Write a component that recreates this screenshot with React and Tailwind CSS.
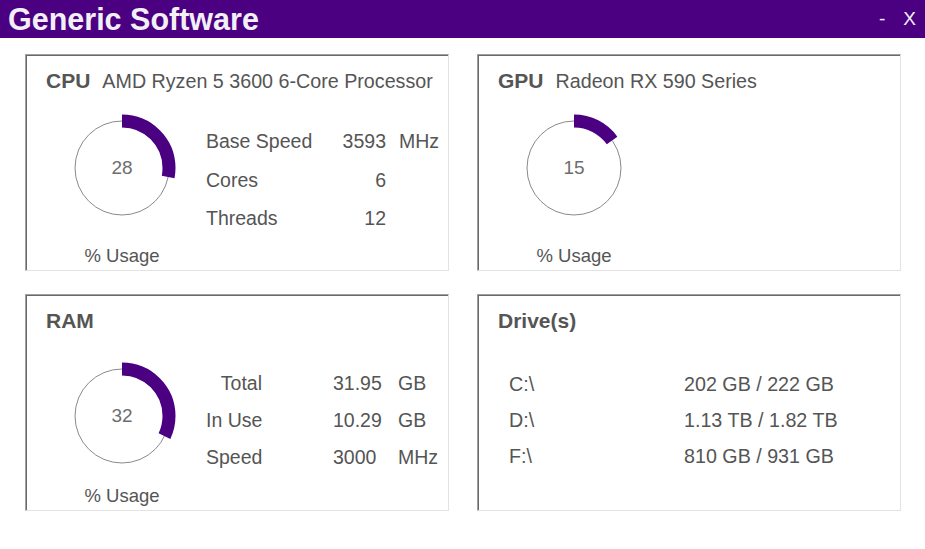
import React from 'react'

const PURPLE = '#4b0082'

function Gauge({ value, mt, gap }) {
  const r = 47
  const c = 2 * Math.PI * r
  return (
    <div className="flex w-[148px] ml-[22px] flex-col items-center self-start" style={{ marginTop: mt }}>
      <div className="relative h-[112px] w-[112px]">
        <svg width="112" height="112" viewBox="0 0 112 112">
          <circle cx="56" cy="56" r={r} fill="none" stroke="#8a8a8a" strokeWidth="1" />
          <circle
            cx="56"
            cy="56"
            r={r}
            fill="none"
            stroke={PURPLE}
            strokeWidth="13"
            strokeDasharray={`${(c * value) / 100} ${c}`}
            transform="rotate(-90 56 56)"
          />
        </svg>
        <div className="absolute inset-0 flex items-center justify-center text-[19px] text-[#6e6e6e]">
          {value}
        </div>
      </div>
      <div className="h-[22px] leading-[22px] text-[18.5px]" style={{ marginTop: gap }}>
        % Usage
      </div>
    </div>
  )
}

function Card({ title, subtitle, children }) {
  return (
    <div className="h-[217px] w-[424px] border border-t-[#a0a0a0] border-l-[#a0a0a0] border-r-[#e3e3e3] border-b-[#e3e3e3] bg-white shadow-[inset_1px_1px_0_#696969]">
      <div className="mt-[10px] flex h-[28px] items-baseline gap-[12px] pl-[20px]">
        <span className="text-[21px] font-bold">{title}</span>
        {subtitle && <span className="text-[19.7px]">{subtitle}</span>}
      </div>
      {children}
    </div>
  )
}

export default function App() {
  return (
    <div className="h-[549px] w-[925px] bg-white text-[#555555] [font-family:'Liberation_Sans',Arial,sans-serif]">
      <div className="flex h-[38px] items-center justify-between bg-[#4b0082] pl-[8px] pr-[9px] text-[#f2f0f6]">
        <span className="text-[30.5px] font-bold leading-none">Generic Software</span>
        <div className="flex items-center gap-[18px] text-[19px]">
          <span>-</span>
          <span>X</span>
        </div>
      </div>

      <div className="grid grid-cols-[424px_424px] gap-x-[28px] gap-y-[23px] pl-[25px] pt-[16px]">
        <Card title="CPU" subtitle="AMD Ryzen 5 3600 6-Core Processor">
          <div className="flex items-start">
            <Gauge value={28} mt={19} gap={21} />
            <div className="ml-[10px] mt-[29px] grid grid-cols-[120px_60px_auto] text-[19.5px]">
              {[
                ['Base Speed', '3593', 'MHz'],
                ['Cores', '6', ''],
                ['Threads', '12', ''],
              ].map(([l, v, u]) => (
                <React.Fragment key={l}>
                  <div className="h-[38.5px] leading-[38px]">{l}</div>
                  <div className="h-[38.5px] text-right leading-[38px]">{v}</div>
                  <div className="h-[38.5px] pl-[13px] leading-[38px]">{u}</div>
                </React.Fragment>
              ))}
            </div>
          </div>
        </Card>

        <Card title="GPU" subtitle="Radeon RX 590 Series">
          <div className="flex items-start">
            <Gauge value={15} mt={19} gap={21} />
          </div>
        </Card>

        <Card title="RAM">
          <div className="flex items-start">
            <Gauge value={32} mt={27} gap={13} />
            <div className="ml-[10px] mt-[32px] grid grid-cols-[56px_71px_65px_auto] text-[19.5px]">
              {[
                ['Total', '31.95', 'GB'],
                ['In Use', '10.29', 'GB'],
                ['Speed', '3000', 'MHz'],
              ].map(([l, v, u]) => (
                <React.Fragment key={l}>
                  <div className="h-[37px] whitespace-nowrap text-right leading-[37px]">{l}</div>
                  <div className="h-[37px]" />
                  <div className="h-[37px] leading-[37px]">{v}</div>
                  <div className="h-[37px] leading-[37px]">{u}</div>
                </React.Fragment>
              ))}
            </div>
          </div>
        </Card>

        <Card title="Drive(s)">
          <div className="ml-[31px] mt-[33px] grid grid-cols-[175px_auto] text-[19.7px]">
            {[
              ['C:\\', '202 GB / 222 GB'],
              ['D:\\', '1.13 TB / 1.82 TB'],
              ['F:\\', '810 GB / 931 GB'],
            ].map(([d, v]) => (
              <React.Fragment key={d}>
                <div className="h-[36px] leading-[36px]">{d}</div>
                <div className="h-[36px] leading-[36px]">{v}</div>
              </React.Fragment>
            ))}
          </div>
        </Card>
      </div>
    </div>
  )
}
